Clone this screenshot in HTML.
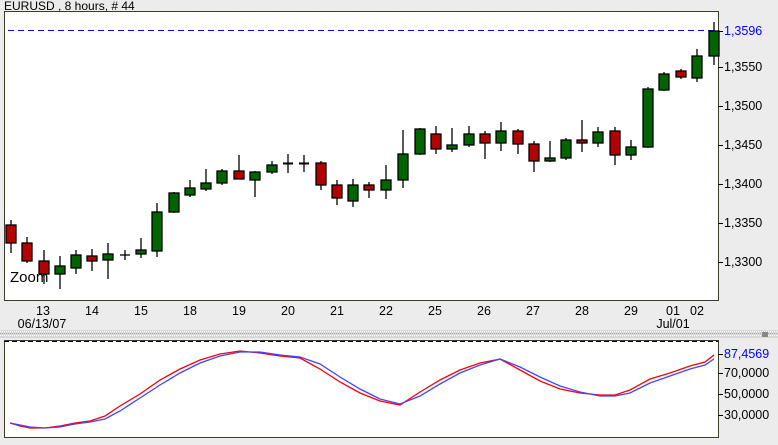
<!DOCTYPE html>
<html><head><meta charset="utf-8"><style>
html,body{margin:0;padding:0;background:#ececec;width:778px;height:445px;overflow:hidden}
svg{display:block;font-family:"Liberation Sans",sans-serif}
</style></head><body>
<svg width="778" height="445" viewBox="0 0 778 445" xmlns="http://www.w3.org/2000/svg">
<rect x="0" y="0" width="778" height="445" fill="#ececec"/>
<rect x="4.5" y="11.5" width="714" height="289" fill="#fff" stroke="#3c3c28"/>
<rect x="4.5" y="340.5" width="714" height="97" fill="#fff" stroke="#3c3c28"/>
<text x="4" y="10" font-size="12" fill="#000">EURUSD , 8 hours, # 44</text>
<line x1="8" y1="30.5" x2="718" y2="30.5" stroke="#0000ff" stroke-dasharray="6,4"/>
<rect x="0" y="330" width="778" height="8" fill="#d8d8d8"/>
<line x1="0" y1="331.5" x2="778" y2="331.5" stroke="#fff" stroke-dasharray="1,1"/>
<line x1="0" y1="333.5" x2="778" y2="333.5" stroke="#aaa" stroke-dasharray="1,1"/>
<line x1="0" y1="335.5" x2="778" y2="335.5" stroke="#fff" stroke-dasharray="1,1"/>
<line x1="4" y1="341.5" x2="718" y2="341.5" stroke="#000" stroke-dasharray="5,3"/>
<rect x="762" y="332" width="6" height="5" fill="#888"/>
<g font-size="12.5" fill="#000" stroke="none">
<text x="724" y="35" fill="#0000ff">1,3596</text>
<text x="724" y="71">1,3550</text>
<text x="724" y="110">1,3500</text>
<text x="724" y="149">1,3450</text>
<text x="724" y="188">1,3400</text>
<text x="724" y="227">1,3350</text>
<text x="724" y="266">1,3300</text>
</g>
<g stroke="#000">
<line x1="718" y1="31.5" x2="723" y2="31.5"/><line x1="718" y1="67.5" x2="723" y2="67.5"/><line x1="718" y1="106.5" x2="723" y2="106.5"/><line x1="718" y1="145.5" x2="723" y2="145.5"/><line x1="718" y1="184.5" x2="723" y2="184.5"/><line x1="718" y1="223.5" x2="723" y2="223.5"/><line x1="718" y1="262.5" x2="723" y2="262.5"/>
<line x1="718" y1="354.5" x2="723" y2="354.5"/><line x1="718" y1="373.5" x2="723" y2="373.5"/><line x1="718" y1="394.5" x2="723" y2="394.5"/><line x1="718" y1="415.5" x2="723" y2="415.5"/>
</g>
<g font-size="12.5" fill="#000">
<text x="724" y="358" fill="#0000ff">87,4569</text>
<text x="724" y="377">70,0000</text>
<text x="724" y="398">50,0000</text>
<text x="724" y="419">30,0000</text>
</g>
<g font-size="12.5" fill="#000" text-anchor="middle">
<text x="43" y="315">13</text><text x="92" y="315">14</text><text x="141" y="315">15</text><text x="190" y="315">18</text><text x="239" y="315">19</text><text x="288" y="315">20</text><text x="337" y="315">21</text><text x="386" y="315">22</text><text x="435" y="315">25</text><text x="484" y="315">26</text><text x="533" y="315">27</text><text x="582" y="315">28</text><text x="631" y="315">29</text><text x="673" y="315">01</text><text x="697" y="315">02</text>
<text x="42" y="328">06/13/07</text><text x="673" y="328">Jul/01</text>
</g>
<text x="10" y="282" font-size="15" fill="#000">Zoom</text>
<g stroke="#000" stroke-width="1.3">
<line x1="11" y1="220" x2="11" y2="253"/><rect x="6" y="225" width="10" height="18" fill="#b40000"/>
<line x1="27" y1="237" x2="27" y2="263"/><rect x="22" y="243" width="10" height="18" fill="#b40000"/>
<line x1="44" y1="250" x2="44" y2="284"/><rect x="39" y="261" width="10" height="13" fill="#b40000"/>
<line x1="60" y1="256" x2="60" y2="289"/><rect x="55" y="266" width="10" height="8" fill="#006400"/>
<line x1="76" y1="250" x2="76" y2="274"/><rect x="71" y="255" width="10" height="13" fill="#006400"/>
<line x1="92" y1="249" x2="92" y2="271"/><rect x="87" y="256" width="10" height="5" fill="#b40000"/>
<line x1="108" y1="243" x2="108" y2="279"/><rect x="103" y="254" width="10" height="6" fill="#006400"/>
<line x1="125" y1="250" x2="125" y2="260"/><line x1="120" y1="255" x2="130" y2="255"/>
<line x1="141" y1="238" x2="141" y2="258"/><rect x="136" y="250" width="10" height="4" fill="#006400"/>
<line x1="157" y1="203" x2="157" y2="257"/><rect x="152" y="212" width="10" height="39" fill="#006400"/>
<line x1="174" y1="192" x2="174" y2="213"/><rect x="169" y="193" width="10" height="19" fill="#006400"/>
<line x1="190" y1="180" x2="190" y2="197"/><rect x="185" y="188" width="10" height="7" fill="#006400"/>
<line x1="206" y1="169" x2="206" y2="191"/><rect x="201" y="183" width="10" height="6" fill="#006400"/>
<line x1="222" y1="169" x2="222" y2="185"/><rect x="217" y="171" width="10" height="12" fill="#006400"/>
<line x1="239" y1="155" x2="239" y2="179"/><rect x="234" y="171" width="10" height="8" fill="#b40000"/>
<line x1="255" y1="171" x2="255" y2="197"/><rect x="250" y="172" width="10" height="8" fill="#006400"/>
<line x1="272" y1="161" x2="272" y2="174"/><rect x="267" y="165" width="10" height="7" fill="#006400"/>
<line x1="288" y1="154" x2="288" y2="173"/><line x1="283" y1="163.5" x2="293" y2="163.5" stroke-width="2"/>
<line x1="304" y1="155" x2="304" y2="172"/><line x1="299" y1="163.5" x2="309" y2="163.5" stroke-width="2"/>
<line x1="321" y1="161" x2="321" y2="190"/><rect x="316" y="163" width="10" height="22" fill="#b40000"/>
<line x1="337" y1="180" x2="337" y2="205"/><rect x="332" y="185" width="10" height="13" fill="#b40000"/>
<line x1="353" y1="179" x2="353" y2="207"/><rect x="348" y="185" width="10" height="16" fill="#006400"/>
<line x1="369" y1="182" x2="369" y2="198"/><rect x="364" y="185" width="10" height="5" fill="#b40000"/>
<line x1="386" y1="165" x2="386" y2="199"/><rect x="381" y="180" width="10" height="10" fill="#006400"/>
<line x1="403" y1="130" x2="403" y2="188"/><rect x="398" y="154" width="10" height="26" fill="#006400"/>
<line x1="420" y1="128" x2="420" y2="155"/><rect x="415" y="129" width="10" height="25" fill="#006400"/>
<line x1="436" y1="126" x2="436" y2="154"/><rect x="431" y="134" width="10" height="15" fill="#b40000"/>
<line x1="452" y1="128" x2="452" y2="152"/><rect x="447" y="145" width="10" height="4" fill="#006400"/>
<line x1="469" y1="126" x2="469" y2="147"/><rect x="464" y="134" width="10" height="11" fill="#006400"/>
<line x1="485" y1="131" x2="485" y2="159"/><rect x="480" y="134" width="10" height="9" fill="#b40000"/>
<line x1="501" y1="122" x2="501" y2="151"/><rect x="496" y="131" width="10" height="12" fill="#006400"/>
<line x1="518" y1="129" x2="518" y2="154"/><rect x="513" y="131" width="10" height="13" fill="#b40000"/>
<line x1="534" y1="141" x2="534" y2="172"/><rect x="529" y="144" width="10" height="17" fill="#b40000"/>
<line x1="550" y1="141" x2="550" y2="162"/><rect x="545" y="158" width="10" height="3" fill="#006400"/>
<line x1="566" y1="138" x2="566" y2="160"/><rect x="561" y="140" width="10" height="18" fill="#006400"/>
<line x1="582" y1="120" x2="582" y2="152"/><rect x="577" y="140" width="10" height="3" fill="#b40000"/>
<line x1="598" y1="127" x2="598" y2="147"/><rect x="593" y="132" width="10" height="11" fill="#006400"/>
<line x1="615" y1="127" x2="615" y2="165"/><rect x="610" y="131" width="10" height="24" fill="#b40000"/>
<line x1="631" y1="140" x2="631" y2="160"/><rect x="626" y="147" width="10" height="8" fill="#006400"/>
<line x1="648" y1="87" x2="648" y2="148"/><rect x="643" y="89" width="10" height="58" fill="#006400"/>
<line x1="664" y1="72" x2="664" y2="91"/><rect x="659" y="74" width="10" height="16" fill="#006400"/>
<line x1="681" y1="69" x2="681" y2="79"/><rect x="676" y="71" width="10" height="6" fill="#b40000"/>
<line x1="697" y1="49" x2="697" y2="82"/><rect x="692" y="56" width="10" height="22" fill="#006400"/>
<line x1="714" y1="22" x2="714" y2="65"/><rect x="709" y="31" width="10" height="25" fill="#006400"/>
</g>
<polyline fill="none" stroke="#ff0000" stroke-width="1.3" points="10,423 20,426 30,428 45,428 60,426 75,423 90,421 105,416 120,406 140,394 160,380 180,369 200,360 220,354 240,351 260,353 280,356 300,358 320,369 340,382 360,393 380,401 400,405 420,392 440,380 460,370 480,363 500,359 520,370 540,381 560,389 580,393 600,395 615,395 630,390 650,379 670,373 690,366 705,362 714,355"/>
<polyline fill="none" stroke="#4444ff" stroke-width="1.3" points="10,423 20,425 30,427 45,428 60,427 75,424 90,422 105,419 120,411 140,398 160,385 180,373 200,363 220,356 240,352 260,352 280,355 300,357 320,364 340,377 360,389 380,399 400,404 420,396 440,384 460,373 480,365 500,359 520,367 540,377 560,386 580,392 600,396 615,396 630,393 650,383 670,376 690,369 705,365 714,359"/>
</svg>
</body></html>
